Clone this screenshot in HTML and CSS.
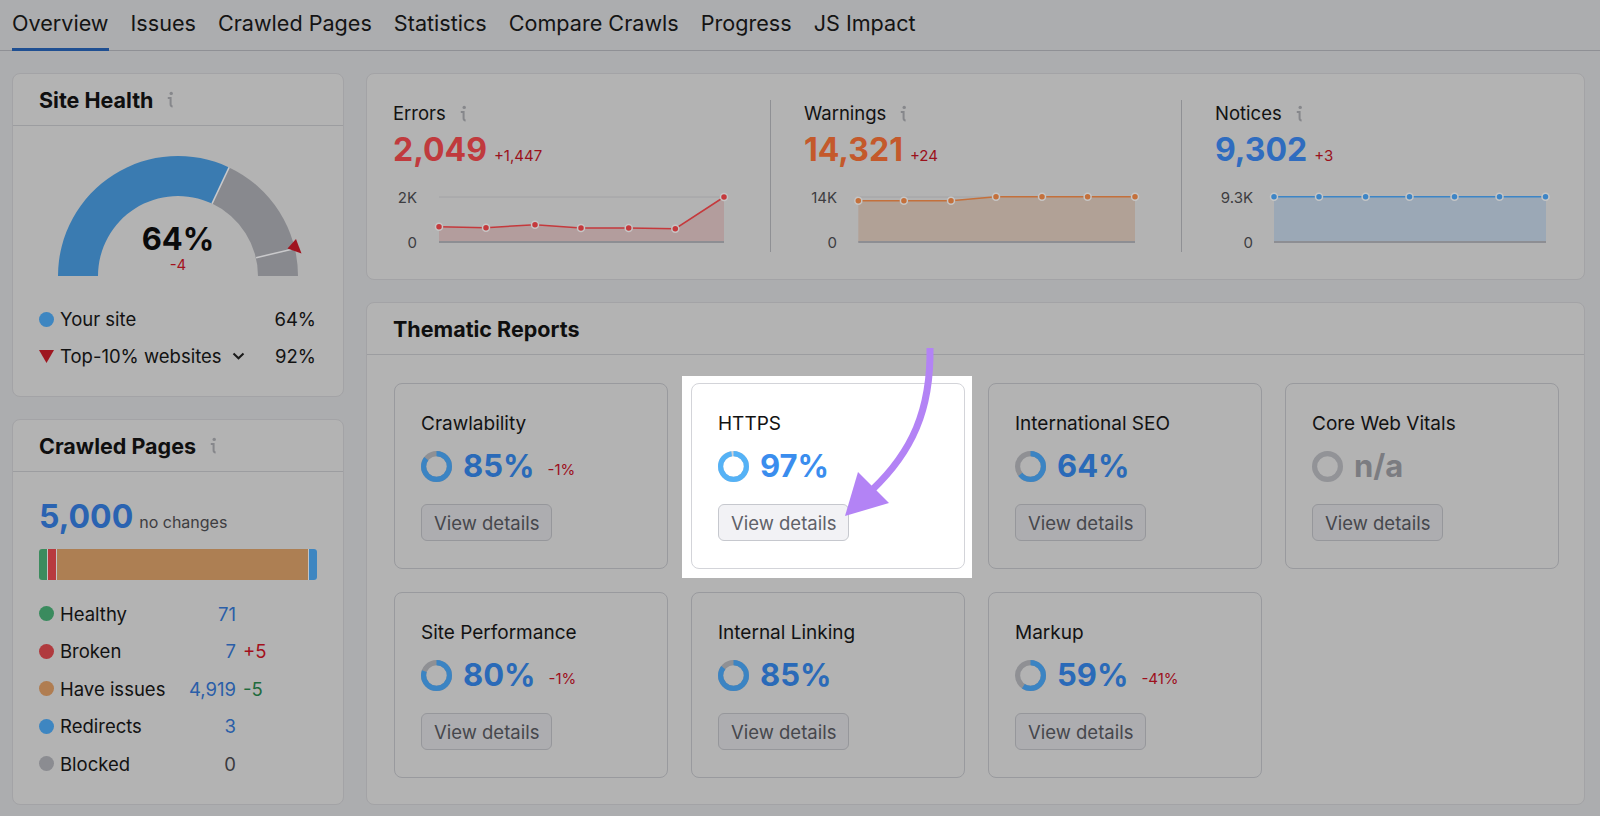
FILE: index.html
```html
<!DOCTYPE html>
<html lang="en">
<head>
<meta charset="utf-8">
<title>Site Audit Overview</title>
<link rel="stylesheet" href="styles.css">
</head>
<body>
<nav class="tabs">
  <a class="tab active">Overview</a>
  <a class="tab">Issues</a>
  <a class="tab">Crawled Pages</a>
  <a class="tab">Statistics</a>
  <a class="tab">Compare Crawls</a>
  <a class="tab">Progress</a>
  <a class="tab">JS Impact</a>
</nav>

<main class="main">
  <div class="col col-left">
    <section class="card health">
      <header class="card-head">
        <h2>Site Health</h2>
        <svg class="info" viewBox="0 0 8 17"><circle cx="5.2" cy="2.4" r="1.7"/><path d="M1.8 7H4.6V13.6Q4.6 15.4 6.6 15.4"/></svg>
      </header>
      <div class="gauge">
        <svg class="gauge-svg" viewBox="-125 -125 250 127">
          <path class="g-blue" d="M-120 0A120 120 0 0 1 51.1 -108.6L34.06 -72.38A80 80 0 0 0 -80 0Z"/>
          <path class="g-gray" d="M51.1 -108.6A120 120 0 0 1 120 0L80 0A80 80 0 0 0 34.06 -72.38Z"/>
          <line class="g-sep" x1="51.1" y1="-108.6" x2="34.06" y2="-72.38"/>
          <line class="g-sep" x1="117.2" y1="-27.5" x2="78.1" y2="-18.3"/>
          <polygon class="g-mark" points="109.5,-27.5 118,-37 123.5,-22.5"/>
        </svg>
        <div class="gauge-val">
          <div class="gauge-num">64%</div>
          <div class="gauge-chg">-4</div>
        </div>
      </div>
      <ul class="legend">
        <li class="lg-row"><span class="dot dot-blue"></span><span class="lg-label">Your site</span><span class="lg-val">64%</span></li>
        <li class="lg-row"><svg class="tri" viewBox="0 0 15 13"><polygon points="0,0 15,0 7.5,13"/></svg><span class="lg-label">Top-10% websites</span><svg class="chev" viewBox="0 0 13 8"><path d="M1.5 1.5L6.5 6.3L11.5 1.5"/></svg><span class="lg-val">92%</span></li>
      </ul>
    </section>

    <section class="card crawled">
      <header class="card-head">
        <h2>Crawled Pages</h2>
        <svg class="info" viewBox="0 0 8 17"><circle cx="5.2" cy="2.4" r="1.7"/><path d="M1.8 7H4.6V13.6Q4.6 15.4 6.6 15.4"/></svg>
      </header>
      <div class="crawl-body">
        <div class="total"><span class="total-num">5,000</span><span class="total-note">no changes</span></div>
        <div class="bar">
          <span class="seg seg-green" style="width:8px"></span>
          <span class="seg seg-red" style="width:8px"></span>
          <span class="seg seg-orange" style="flex:1"></span>
          <span class="seg seg-blue" style="width:8px"></span>
        </div>
        <ul class="pages">
          <li class="pg-row"><span class="dot dot-green"></span><span class="pg-label">Healthy</span><span class="pg-val">71</span></li>
          <li class="pg-row"><span class="dot dot-red"></span><span class="pg-label">Broken</span><span class="pg-val">7</span><span class="pg-delta up">+5</span></li>
          <li class="pg-row"><span class="dot dot-orange"></span><span class="pg-label">Have issues</span><span class="pg-val">4,919</span><span class="pg-delta down">-5</span></li>
          <li class="pg-row"><span class="dot dot-blue"></span><span class="pg-label">Redirects</span><span class="pg-val">3</span></li>
          <li class="pg-row"><span class="dot dot-gray"></span><span class="pg-label">Blocked</span><span class="pg-val zero">0</span></li>
        </ul>
      </div>
    </section>
  </div>

  <div class="col col-right">
    <section class="card metrics">
      <div class="metric">
        <div class="m-label">Errors <svg class="info" viewBox="0 0 8 17"><circle cx="5.2" cy="2.4" r="1.7"/><path d="M1.8 7H4.6V13.6Q4.6 15.4 6.6 15.4"/></svg></div>
        <div class="m-value"><span class="m-num err">2,049</span><span class="m-delta">+1,447</span></div>
        <svg class="chart" viewBox="0 0 340 72">
          <text class="ax" x="24" y="17">2K</text>
          <text class="ax" x="24" y="62">0</text>
          <line class="grid" x1="46" y1="17" x2="331" y2="17"/>
          <polygon class="fill-err" points="46,46.7 93,47.7 142,44.7 188,48 235.7,48 282.3,48.7 331,17 331,62 46,62"/>
          <polyline class="line-err" points="46,46.7 93,47.7 142,44.7 188,48 235.7,48 282.3,48.7 331,17"/>
          <line class="base" x1="46" y1="62" x2="331" y2="62"/>
          <g class="pt-err">
            <circle cx="46" cy="46.7" r="3.5"/><circle cx="93" cy="47.7" r="3.5"/><circle cx="142" cy="44.7" r="3.5"/><circle cx="188" cy="48" r="3.5"/><circle cx="235.7" cy="48" r="3.5"/><circle cx="282.3" cy="48.7" r="3.5"/><circle cx="331" cy="17" r="3.5"/>
          </g>
        </svg>
      </div>
      <div class="metric">
        <div class="m-label">Warnings <svg class="info" viewBox="0 0 8 17"><circle cx="5.2" cy="2.4" r="1.7"/><path d="M1.8 7H4.6V13.6Q4.6 15.4 6.6 15.4"/></svg></div>
        <div class="m-value"><span class="m-num warn">14,321</span><span class="m-delta">+24</span></div>
        <svg class="chart" viewBox="0 0 340 72">
          <text class="ax" x="33" y="17">14K</text>
          <text class="ax" x="33" y="62">0</text>
          <line class="grid" x1="54" y1="17" x2="331" y2="17"/>
          <polygon class="fill-warn" points="54.3,20.7 99.9,20.7 147,20.7 192,16.7 238,16.7 283.6,16.7 331,16.7 331,62 54.3,62"/>
          <polyline class="line-warn" points="54.3,20.7 99.9,20.7 147,20.7 192,16.7 238,16.7 283.6,16.7 331,16.7"/>
          <line class="base" x1="54.3" y1="62" x2="331" y2="62"/>
          <g class="pt-warn">
            <circle cx="54.3" cy="20.7" r="3.5"/><circle cx="99.9" cy="20.7" r="3.5"/><circle cx="147" cy="20.7" r="3.5"/><circle cx="192" cy="16.7" r="3.5"/><circle cx="238" cy="16.7" r="3.5"/><circle cx="283.6" cy="16.7" r="3.5"/><circle cx="331" cy="16.7" r="3.5"/>
          </g>
        </svg>
      </div>
      <div class="metric">
        <div class="m-label">Notices <svg class="info" viewBox="0 0 8 17"><circle cx="5.2" cy="2.4" r="1.7"/><path d="M1.8 7H4.6V13.6Q4.6 15.4 6.6 15.4"/></svg></div>
        <div class="m-value"><span class="m-num note">9,302</span><span class="m-delta">+3</span></div>
        <svg class="chart" viewBox="0 0 340 72">
          <text class="ax" x="38" y="17">9.3K</text>
          <text class="ax" x="38" y="62">0</text>
          <polygon class="fill-note" points="59,16.7 331,16.7 331,62 59,62"/>
          <polyline class="line-note" points="59,16.7 104,16.7 150.6,16.7 194.5,16.7 239.5,16.7 284.5,16.7 330.5,16.7"/>
          <line class="base" x1="59" y1="62" x2="331" y2="62"/>
          <g class="pt-note">
            <circle cx="59" cy="16.7" r="3.5"/><circle cx="104" cy="16.7" r="3.5"/><circle cx="150.6" cy="16.7" r="3.5"/><circle cx="194.5" cy="16.7" r="3.5"/><circle cx="239.5" cy="16.7" r="3.5"/><circle cx="284.5" cy="16.7" r="3.5"/><circle cx="330.5" cy="16.7" r="3.5"/>
          </g>
        </svg>
      </div>
    </section>

    <section class="card thematic">
      <header class="card-head"><h2>Thematic Reports</h2></header>
      <div class="reports">
        <div class="report">
          <div class="r-title">Crawlability</div>
          <div class="r-score"><svg class="donut" viewBox="0 0 30 30"><circle class="d-bg" cx="15" cy="15" r="12.5"/><circle class="d-fg" cx="15" cy="15" r="12.5" stroke-dasharray="66.76 78.54"/></svg><span class="r-pct">85%</span><span class="r-delta">-1%</span></div>
          <button class="btn">View details</button>
        </div>
        <div class="spot">
          <div class="report lit">
            <div class="r-title">HTTPS</div>
            <div class="r-score"><svg class="donut" viewBox="0 0 30 30"><circle class="d-bg" cx="15" cy="15" r="12.5"/><circle class="d-fg" cx="15" cy="15" r="12.5" stroke-dasharray="76.18 78.54"/></svg><span class="r-pct">97%</span></div>
            <button class="btn">View details</button>
          </div>
        </div>
        <div class="report">
          <div class="r-title">International SEO</div>
          <div class="r-score"><svg class="donut" viewBox="0 0 30 30"><circle class="d-bg" cx="15" cy="15" r="12.5"/><circle class="d-fg" cx="15" cy="15" r="12.5" stroke-dasharray="50.27 78.54"/></svg><span class="r-pct">64%</span></div>
          <button class="btn">View details</button>
        </div>
        <div class="report">
          <div class="r-title">Core Web Vitals</div>
          <div class="r-score"><svg class="donut" viewBox="0 0 30 30"><circle class="d-bg na" cx="15" cy="15" r="12.5"/></svg><span class="r-pct na">n/a</span></div>
          <button class="btn">View details</button>
        </div>
        <div class="report">
          <div class="r-title">Site Performance</div>
          <div class="r-score"><svg class="donut" viewBox="0 0 30 30"><circle class="d-bg" cx="15" cy="15" r="12.5"/><circle class="d-fg" cx="15" cy="15" r="12.5" stroke-dasharray="62.83 78.54"/></svg><span class="r-pct">80%</span><span class="r-delta">-1%</span></div>
          <button class="btn">View details</button>
        </div>
        <div class="report">
          <div class="r-title">Internal Linking</div>
          <div class="r-score"><svg class="donut" viewBox="0 0 30 30"><circle class="d-bg" cx="15" cy="15" r="12.5"/><circle class="d-fg" cx="15" cy="15" r="12.5" stroke-dasharray="66.76 78.54"/></svg><span class="r-pct">85%</span></div>
          <button class="btn">View details</button>
        </div>
        <div class="report">
          <div class="r-title">Markup</div>
          <div class="r-score"><svg class="donut" viewBox="0 0 30 30"><circle class="d-bg" cx="15" cy="15" r="12.5"/><circle class="d-fg" cx="15" cy="15" r="12.5" stroke-dasharray="46.34 78.54"/></svg><span class="r-pct">59%</span><span class="r-delta">-41%</span></div>
          <button class="btn">View details</button>
        </div>
      </div>
    </section>
  </div>
</main>

<svg class="arrow" viewBox="0 0 1600 816">
  <path class="arrow-line" d="M930 348C931 410 912 452 872 490"/>
  <polygon class="arrow-head" points="858,472 889,503 845,516"/>
</svg>
</body>
</html>
```

FILE: styles.css
```css
* { box-sizing: border-box; }
html, body { margin: 0; padding: 0; }
body {
  width: 1600px;
  height: 816px;
  overflow: hidden;
  background: #acadaf;
  font-family: Inter, "Noto Sans", "Liberation Sans", sans-serif;
  color: #121212;
  position: relative;
}
ul { list-style: none; margin: 0; padding: 0; }
h2 { margin: 0; font-size: 21.5px; font-weight: 700; color: #0f0f0f; }

/* tabs */
.tabs {
  display: flex;
  gap: 22px;
  height: 51px;
  padding-left: 12px;
  border-bottom: 1px solid #8f9095;
}
.tab {
  display: block;
  font-size: 21.6px;
  line-height: 46px;
  height: 51px;
  color: #141414;
  border-bottom: 3px solid transparent;
  margin-bottom: -1px;
  white-space: nowrap;
}
.tab.active { border-bottom-color: #1f4f92; }

/* layout */
.main {
  display: grid;
  grid-template-columns: 332px 1219px;
  column-gap: 22px;
  padding: 22px 0 0 12px;
}
.col { display: flex; flex-direction: column; gap: 22px; }

.card {
  background: #b3b3b3;
  border: 1px solid #a3a3a6;
  border-radius: 8px;
}
.card-head {
  height: 52px;
  display: flex;
  align-items: center;
  gap: 13px;
  padding: 0 26px;
  border-bottom: 1px solid #9c9da0;
}
.info { width: 8px; height: 17px; flex: none; }
.info circle { fill: #86878b; }
.info path { fill: none; stroke: #86878b; stroke-width: 2; }

/* site health */
.health { height: 324px; }
.gauge {
  display: grid;
  justify-items: center;
  margin-top: 25px;
}
.gauge > * { grid-area: 1 / 1; }
.gauge-svg { width: 250px; height: 127px; display: block; }
.g-blue { fill: #3a7bb1; }
.g-gray { fill: #88898e; }
.g-sep { stroke: #c9c9cb; stroke-width: 1.5; }
.g-mark { fill: #a0141f; }
.gauge-val { align-self: end; text-align: center; padding-bottom: 5px; }
.gauge-num { font-size: 31px; font-weight: 700; line-height: 34px; color: #0a0a0a; }
.gauge-chg { font-size: 15px; line-height: 16px; color: #a3121d; margin-top: 1px; }

.legend { padding: 0 27px 0 26px; margin-top: 29px; display: flex; flex-direction: column; gap: 13px; }
.lg-row { display: flex; align-items: center; height: 24px; font-size: 18.5px; white-space: nowrap; }
.dot { width: 15px; height: 15px; border-radius: 50%; flex: none; margin-right: 6px; }
.tri { width: 15px; height: 13px; margin-right: 6px; flex: none; }
.tri polygon { fill: #9e1620; }
.chev { width: 13px; height: 8px; margin-left: 10px; flex: none; }
.chev path { fill: none; stroke: #1a1a1a; stroke-width: 2; }
.lg-val { margin-left: auto; }

.dot-blue { background: #3e86c1; }
.dot-green { background: #3a8b5e; }
.dot-red { background: #b03a3e; }
.dot-orange { background: #b07d51; }
.dot-gray { background: #8b8c91; }

/* crawled */
.crawled { height: 386px; }
.crawl-body { padding: 0 26px 0 26px; }
.total { margin-top: 26px; height: 38px; display: flex; align-items: baseline; gap: 6px; }
.total-num { font-size: 32px; font-weight: 700; color: #2a63b1; line-height: 38px; }
.total-note { font-size: 16px; color: #3d3d41; line-height: 1; }
.bar { display: flex; gap: 1px; height: 31px; margin-top: 13px; border-radius: 3px; overflow: hidden; background: #c4c4c4; }
.seg { display: block; height: 100%; }
.seg-green { background: #3c8b5e; }
.seg-red { background: #b8393e; }
.seg-orange { background: #ad7f53; }
.seg-blue { background: #3e86c1; }
.pages { margin-top: 15px; }
.pg-row { display: flex; align-items: center; height: 37.5px; font-size: 18.5px; white-space: nowrap; }
.pg-label { flex: none; width: 104px; white-space: nowrap; }
.pg-val { flex: none; width: 72px; text-align: right; color: #2a5ea8; }
.pg-val.zero { color: #3a3a3e; }
.pg-delta { margin-left: 7px; }
.pg-delta.up { color: #a3101b; }
.pg-delta.down { color: #1f6b3d; }

/* metrics */
.metrics { height: 207px; display: flex; padding: 26px 0 0 26px; }
.metric {
  flex: none;
  width: 411px;
  height: 152px;
  padding: 0 46px 0 33px;
  border-right: 1px solid #8f9094;
}
.metric:first-child { width: 378px; padding-left: 0; }
.metric:last-child { border-right: none; width: 380px; padding-right: 0; }
.m-label { display: flex; align-items: center; gap: 13px; font-size: 18.5px; line-height: 26px; color: #121212; }
.m-value { display: flex; align-items: baseline; gap: 7px; margin-top: 4px; height: 40px; }
.m-num { font-size: 32px; font-weight: 700; line-height: 40px; }
.m-num.err { color: #c03a3d; }
.m-num.warn { color: #c4592b; }
.m-num.note { color: #2f6cbf; }
.m-delta { font-size: 15px; color: #9b111c; line-height: 1; }
.chart { display: block; width: 340px; height: 72px; margin-top: 10px; overflow: visible; }
.ax { font-size: 15px; fill: #3d3d41; text-anchor: end; dominant-baseline: central; font-family: Inter, "Liberation Sans", sans-serif; }
.grid { stroke: #a2a2a5; stroke-width: 1; }
.base { stroke: #8d8e93; stroke-width: 2; }
.fill-err { fill: #b39d9d; }
.line-err { fill: none; stroke: #c5393c; stroke-width: 1.5; }
.pt-err circle { fill: #c5393c; stroke: #c6c6c6; stroke-width: 1.5; }
.fill-warn { fill: #b1a196; }
.line-warn { fill: none; stroke: #c4703b; stroke-width: 1.5; }
.pt-warn circle { fill: #c4703b; stroke: #c6c6c6; stroke-width: 1.5; }
.fill-note { fill: #9ba8b6; }
.line-note { fill: none; stroke: #3d85c6; stroke-width: 1.5; }
.pt-note circle { fill: #3d85c6; stroke: #c6c6c6; stroke-width: 1.5; }

/* thematic */
.thematic { height: 503px; }
.thematic .card-head { padding-left: 26px; }
.reports {
  display: grid;
  grid-template-columns: repeat(4, 274px);
  grid-auto-rows: 186px;
  gap: 23px;
  padding: 28px 27px 0 27px;
}
.report {
  border: 1px solid #999a9e;
  border-radius: 8px;
  padding: 27px 26px 0 26px;
  height: 186px;
}
.spot {
  margin: -7px -7px -9px -9px;
  padding: 7px 7px 9px 9px;
  background: #ffffff;
}
.r-title { font-size: 19px; line-height: 26px; color: #121212; white-space: nowrap; }
.r-score { display: flex; align-items: center; height: 38px; margin-top: 10px; }
.donut { width: 31px; height: 31px; flex: none; margin-right: 11px; }
.d-bg { fill: none; stroke: #8f9094; stroke-width: 5; }
.d-bg.na { stroke: #929397; }
.d-fg { fill: none; stroke: #3b84c3; stroke-width: 5; transform: rotate(-90deg); transform-origin: 15px 15px; }
.r-pct { font-size: 31px; font-weight: 700; color: #2a6ab8; line-height: 38px; }
.r-pct.na { color: #7b7c81; }
.r-delta { font-size: 15px; color: #9d0f1c; margin-left: 13px; align-self: flex-end; padding-bottom: 6px; }
.btn {
  display: block;
  margin-top: 19px;
  height: 37px;
  padding: 0 12px;
  font-family: inherit;
  font-size: 18.5px;
  color: #46474c;
  background: #adadb0;
  border: 1px solid #96979b;
  border-radius: 6px;
  white-space: nowrap;
}

.report.lit { background: #fff; border-color: #d3d4d9; }
.lit .r-title { color: #111; }
.lit .d-bg { stroke: #d2d3d7; }
.lit .d-fg { stroke: #55b2f6; }
.lit .r-pct { color: #3a8dee; }
.lit .btn { background: #f2f2f5; border-color: #c6c8ce; color: #5f6169; }

/* annotation arrow */
.arrow {
  position: absolute;
  left: 0;
  top: 0;
  width: 1600px;
  height: 816px;
  pointer-events: none;
}
.arrow-line { fill: none; stroke: #b383f5; stroke-width: 7; stroke-linecap: butt; }
.arrow-head { fill: #b383f5; }
```
